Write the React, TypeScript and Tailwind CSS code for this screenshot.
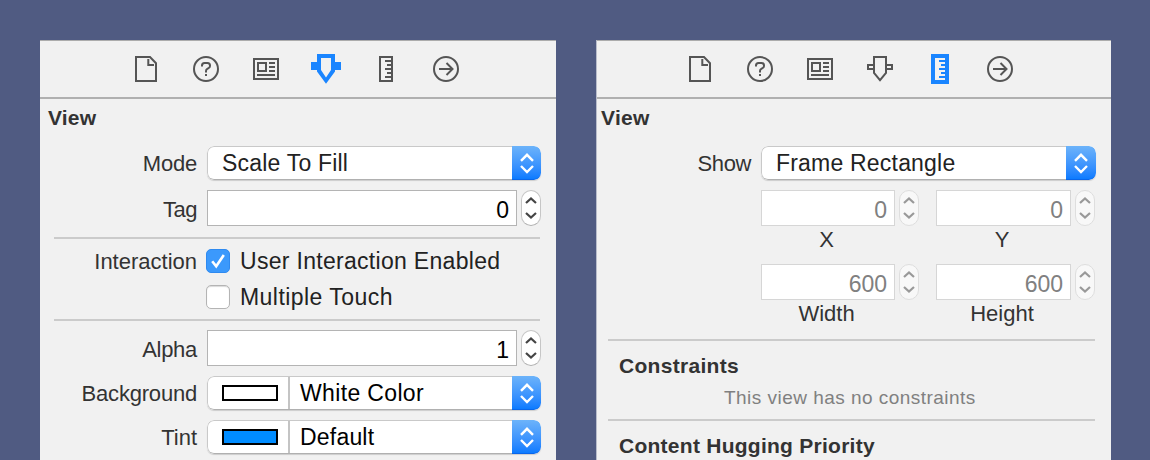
import type { ReactNode } from "react";

const STROKE = "#555555";
const ACTIVE = "#1a85ff";

function FileIcon() {
  return (
    <svg width="30" height="30" viewBox="0 0 30 30" fill="none" stroke={STROKE} strokeWidth="2">
      <path d="M5 3h14L25 9.2V27H5z" />
      <path d="M17.3 5v6H23" />
    </svg>
  );
}

function HelpIcon() {
  return (
    <svg width="30" height="30" viewBox="0 0 30 30" fill="none" stroke={STROKE} strokeWidth="2">
      <circle cx="15" cy="15" r="12" />
      <path d="M11 12.5V11.5Q11 9 13.5 9H16.5Q19 9 19 11.5V12Q19 13.5 17.5 14.2L16.3 14.8Q15 15.5 15 17V18.5" />
      <path d="M15 20v2" />
    </svg>
  );
}

function IdentityIcon() {
  return (
    <svg width="30" height="30" viewBox="0 0 30 30" fill="none" stroke={STROKE} strokeWidth="2">
      <path d="M3 5h24v20H3z" />
      <path d="M7 9h8v8H7z" />
      <path d="M18 9h6M18 13h6M18 17h6M6 21h18" />
    </svg>
  );
}

function AttributesIcon({ active }: { active?: boolean }) {
  return active ? (
    <svg width="30" height="30" viewBox="0 0 30 30" fill={ACTIVE}>
      <path fillRule="evenodd" d="M6 0h18v8h6v8h-6v1.5L15 29.7 6 17.5V16H0V8h6zM10 4v12l5 7.5L20 16V4z" />
    </svg>
  ) : (
    <svg width="30" height="30" viewBox="0 0 30 30" fill="none" stroke={STROKE} strokeWidth="2">
      <path d="M9 3h12v16l-6 7.2L9 19z" />
      <path d="M9 11H3v4h6M21 11h6v4h-6" />
    </svg>
  );
}

function SizeIcon({ active }: { active?: boolean }) {
  return active ? (
    <svg width="30" height="30" viewBox="0 0 30 30">
      <path fill={ACTIVE} d="M6 0h18v30H6z" />
      <path fill="#f1f1f1" d="M10 4h10v2h-6v2h6v2h-4v2h4v2h-6v2h6v2h-4v2h4v2h-6v2h6v2H10z" />
    </svg>
  ) : (
    <svg width="30" height="30" viewBox="0 0 30 30" fill="none" stroke={STROKE} strokeWidth="2">
      <path d="M9 3h12v24H9z" />
      <path d="M14 7h6M16 11h4M14 15h6M16 19h4M14 23h6" />
    </svg>
  );
}

function ConnectionsIcon() {
  return (
    <svg width="30" height="30" viewBox="0 0 30 30" fill="none" stroke={STROKE} strokeWidth="2">
      <circle cx="15" cy="15" r="12" />
      <path d="M8 15h13M15.5 9l6 6-6 6" />
    </svg>
  );
}

function Toolbar({ selected, inset }: { selected: "attributes" | "size"; inset: string }) {
  return (
    <div className={`flex h-[59px] gap-[30px] border-t border-b-2 border-t-[#acacac] border-b-[#b0b0b0] pt-[13px] ${inset}`}>
      <FileIcon />
      <HelpIcon />
      <IdentityIcon />
      <AttributesIcon active={selected === "attributes"} />
      <SizeIcon active={selected === "size"} />
      <ConnectionsIcon />
    </div>
  );
}

function Label({ children, className }: { children: ReactNode; className: string }) {
  return <div className={`shrink-0 whitespace-nowrap text-right text-[22px] leading-[36px] text-[#333] ${className}`}>{children}</div>;
}

function Popup({ children, swatch, width, cap }: { children: ReactNode; swatch?: string; width: string; cap: string }) {
  return (
    <div className={`flex h-[34px] overflow-hidden rounded-[7px] bg-white shadow-[0_1px_1px_rgba(0,0,0,0.15)] ${width}`}>
      <div className="flex flex-1 items-center rounded-l-[7px] border border-r-0 border-[#c9c9c9] border-b-[#b0b0b0]">
        {swatch && (
          <div className="flex h-full w-[82px] items-center border-r-2 border-[#c4c4c4] pl-[14px]">
            <div className={`h-4 w-14 border-2 border-black ${swatch}`} />
          </div>
        )}
        {children}
      </div>
      <div className={`flex items-center justify-center rounded-r-[7px] border-b border-[#0a66ea] bg-linear-to-b from-[#6cb3fa] to-[#0a7bff] ${cap}`}>
        <svg width="16" height="22" viewBox="0 0 16 22" fill="none" stroke="white" strokeWidth="2.4">
          <path d="M2 8.8 8 2.8l6 6M2 14l6 6 6-6" />
        </svg>
      </div>
    </div>
  );
}

function Field({ value, width, disabled }: { value: string; width: string; disabled?: boolean }) {
  return (
    <div className="flex gap-1">
      <div
        className={`h-9 border bg-white pr-[7px] pt-px text-right text-[23px] leading-[36px] ${width} ${
          disabled ? "border-[#d6d6d6] text-[#808080]" : "border-[#b4b4b4] text-black"
        }`}
      >
        {value}
      </div>
      <div
        className={`flex h-9 w-5 items-center justify-center rounded-full border ${
          disabled ? "border-[#dedede] bg-[#f8f8f8] text-[#999]" : "border-[#c6c6c6] border-b-[#b0b0b0] bg-white text-[#444]"
        }`}
      >
        <svg width="12" height="24" viewBox="0 0 12 24" fill="none" stroke="currentColor" strokeWidth="2.2">
          <path d="M1 7l5-4.6L11 7M1 17l5 4.6L11 17" />
        </svg>
      </div>
    </div>
  );
}

function Checkbox({ checked }: { checked?: boolean }) {
  return checked ? (
    <div className="flex size-6 items-center justify-center rounded-[5px] border border-[#2f8af0] bg-[#3b99fc]">
      <svg width="18" height="18" viewBox="0 0 18 18" fill="none" stroke="white" strokeWidth="2.6">
        <path d="M3.2 9.2l4 5L14.8 3" />
      </svg>
    </div>
  ) : (
    <div className="size-6 rounded-[5px] border border-[#b4b4b4] bg-white shadow-[inset_0_1px_1px_rgba(0,0,0,0.15)]" />
  );
}

function Rule({ className }: { className: string }) {
  return <div className={`h-0.5 bg-[#cbcbcb] ${className}`} />;
}

function AttributesPanel() {
  return (
    <section className="h-[420px] w-[516px] overflow-hidden bg-[#f1f1f1]">
      <Toolbar selected="attributes" inset="pl-[91px]" />
      <h2 className="h-[47px] pl-2 pt-1 text-[21px] font-bold leading-[30px] tracking-[0.2px] text-[#333]">View</h2>
      <div className="flex h-[44px] gap-[10px]">
        <Label className="w-[157px] tracking-[-0.2px]">Mode</Label>
        <Popup width="w-[334px]" cap="w-[29px]"><span className="pl-[14px] text-[23px] tracking-[0.2px] text-[#222]">Scale To Fill</span></Popup>
      </div>
      <div className="flex h-[47px] gap-[10px]">
        <Label className="w-[157px] pt-0.5 tracking-[-0.5px]">Tag</Label>
        <Field value="0" width="w-[310px]" />
      </div>
      <Rule className="ml-[14px] w-[486px]" />
      <div className="flex h-[80px] pt-[10px]">
        <Label className="-mt-[5px] mr-[9px] w-[157px]">Interaction</Label>
        <div className="flex flex-col gap-3 text-[23px] leading-6 text-[#222]">
          <div className="flex gap-[10px]"><Checkbox checked /><span className="tracking-[0.3px]">User Interaction Enabled</span></div>
          <div className="flex gap-[10px]"><Checkbox /><span className="tracking-[0.45px]">Multiple Touch</span></div>
        </div>
      </div>
      <Rule className="ml-[14px] w-[486px]" />
      <div className="mt-[9px] flex h-[46px] gap-[10px]">
        <Label className="w-[157px] pt-0.5 tracking-[-0.3px]">Alpha</Label>
        <Field value="1" width="w-[310px]" />
      </div>
      <div className="flex h-[44px] gap-[10px]">
        <Label className="w-[157px] tracking-[-0.2px]">Background</Label>
        <Popup swatch="bg-white" width="w-[334px]" cap="w-[29px]"><span className="pl-[10px] text-[23px] tracking-[0.35px] text-black">White Color</span></Popup>
      </div>
      <div className="flex h-[44px] gap-[10px]">
        <Label className="w-[157px]">Tint</Label>
        <Popup swatch="bg-[#008cff]" width="w-[334px]" cap="w-[29px]"><span className="pl-[10px] text-[23px] tracking-[0.2px] text-black">Default</span></Popup>
      </div>
    </section>
  );
}

function Dimension({ value, name, width }: { value: string; name: string; width: string }) {
  return (
    <div className="h-[74px]">
      <Field value={value} width={width} disabled />
      <div className={`pr-[3px] text-center text-[22px] leading-7 text-[#333] ${width}`}>{name}</div>
    </div>
  );
}

function SizePanel() {
  return (
    <section className="h-[420px] w-[514.5px] overflow-hidden border-l border-[#b9bdcb] bg-[#f1f1f1]">
      <Toolbar selected="size" inset="pl-[88px]" />
      <h2 className="h-[47px] pl-1 pt-1 text-[21px] font-bold leading-[30px] tracking-[0.3px] text-[#333]">View</h2>
      <div className="flex h-[44px] gap-[10px]">
        <Label className="w-[154px] tracking-[-0.4px]">Show</Label>
        <Popup width="w-[335px]" cap="w-[30px]"><span className="pl-[14px] text-[23px] tracking-[0.2px] text-[#222]">Frame Rectangle</span></Popup>
      </div>
      <div className="ml-[164px] grid w-[334px] grid-cols-[175px_159px]">
        <Dimension value="0" name="X" width="w-[134px]" />
        <Dimension value="0" name="Y" width="w-[135px]" />
        <Dimension value="600" name="Width" width="w-[134px]" />
        <Dimension value="600" name="Height" width="w-[135px]" />
      </div>
      <Rule className="ml-[11px] mt-px w-[487px]" />
      <h3 className="h-[42px] pl-[22px] pt-[9px] text-[21px] font-bold leading-[32px] tracking-[0.3px] text-[#333]">Constraints</h3>
      <p className="h-[36px] pl-[127px] text-[19px] leading-[29px] tracking-[0.47px] text-[#808080]">This view has no constraints</p>
      <Rule className="ml-[11px] w-[487px]" />
      <h3 className="pl-[22px] pt-[9px] text-[21px] font-bold leading-[32px] tracking-[0.26px] text-[#333]">Content Hugging Priority</h3>
    </section>
  );
}

export default function App() {
  return (
    <main className="flex h-[460px] w-[1150px] gap-10 overflow-hidden bg-[#505b82] pl-10 pt-10 font-['Liberation_Sans',Arial,sans-serif]">
      <AttributesPanel />
      <SizePanel />
    </main>
  );
}
